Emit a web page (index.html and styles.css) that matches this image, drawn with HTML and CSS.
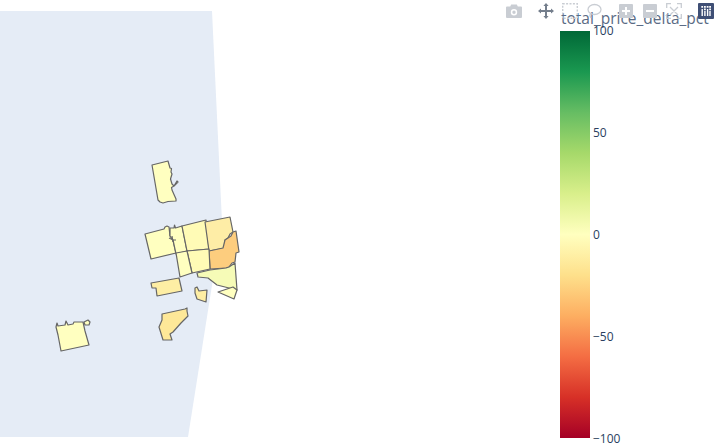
FILE: index.html
```html
<!DOCTYPE html>
<html lang="en">
<head>
<meta charset="utf-8">
<title>total_price_delta_pct map</title>
<link rel="stylesheet" href="styles.css">
</head>
<body>
<div class="stage">
  <svg class="chart" width="714" height="447" viewBox="0 0 714 447" xmlns="http://www.w3.org/2000/svg">
    <defs>
      <linearGradient id="rdylgn" x1="0" y1="1" x2="0" y2="0">
        <stop offset="0" stop-color="#a50026"/>
        <stop offset="0.1" stop-color="#d73027"/>
        <stop offset="0.2" stop-color="#f46d43"/>
        <stop offset="0.3" stop-color="#fdae61"/>
        <stop offset="0.4" stop-color="#fee08b"/>
        <stop offset="0.5" stop-color="#ffffbf"/>
        <stop offset="0.6" stop-color="#d9ef8b"/>
        <stop offset="0.7" stop-color="#a6d96a"/>
        <stop offset="0.8" stop-color="#66bd63"/>
        <stop offset="0.9" stop-color="#1a9850"/>
        <stop offset="1" stop-color="#006837"/>
      </linearGradient>
    </defs>

    <polygon class="land" points="0,11 212,11 222,222 188,437 0,437"/>

    <g class="regions">
      <polygon class="r-pale" points="152,165 168,161 170,168 171.500,168.500 171,172 172,174 170.500,179 172,184 174,186 177,181 178,182 174,186 171.500,187.500 172,190 176,199 176,201 168,201.500 163,203 160,202 158,200"/>
      <polygon class="r-pale" points="145,234 164,229 165,227 167,226 169,227 170,236 173,240 176,253 151,259"/>
      <polygon class="r-pale" points="170,228 174,228 174.500,225 175.500,228 182,226 187,251 176,254 173,240 170,236"/>
      <polygon class="r-pale2" points="182,226 206,220 209,249 187,251"/>
      <polygon class="r-sand" points="205,222 230,217 233,232 230,234 228,238 225,240 225,248 209,251"/>
      <polygon class="r-orange" points="209,251 223,248 225,240 228,238 231,236 233,232 236,231 239,252 236,253 235,262 232,263 229,267 226,268 210,269"/>
      <polygon class="r-pale2" points="187,251 209,249 210,269 192,273"/>
      <polygon class="r-pale" points="176,253 187,251 192,273 180,277"/>
      <polygon class="r-lime" points="197,273 210,270 226,268 229,267 235,263 237,290 217,285 208,278 198,277"/>
      <polygon class="r-pale" points="218,292 233,287 237,290 234,299"/>
      <polygon class="r-sand2" points="151,283 179,278 182,291 157,296 156,288 152,288"/>
      <polygon class="r-sand2" points="195,288 197,287 199,291 207,290 206,302 197,299 195,293"/>
      <polygon class="r-sand3" points="162,314 185,309 187,308 187,311 188,316 181,323 173,332 170,334 172,340 163,340 159,327 162,320"/>
      <polygon class="r-pale" points="56,327 57,323 58,326 65,325 66,321 68,325 73,324 74,322 83,322 85,331 89,345 61,351 58,335"/>
      <polygon class="r-pale" points="84,322 88,320 90,322 89,325 85,325"/>
      <path class="r-detail" d="M169 238l4 2 3 0M172 236l1 6"/>
    </g>

    <rect class="colorbar" x="560" y="31" width="30" height="407"/>
    <text class="cb-title" x="561" y="24">total_price_delta_pct</text>
    <text class="cb-tick" x="593" y="35">100</text>
    <text class="cb-tick" x="593" y="137">50</text>
    <text class="cb-tick" x="593" y="239">0</text>
    <text class="cb-tick" x="593" y="341">−50</text>
    <text class="cb-tick" x="593" y="443">−100</text>
  </svg>

  <div class="modebar">
    <svg class="mb-icon mb-camera" viewBox="0 0 16 16"><path fill-rule="evenodd" d="M0 4.500a1 1 0 0 1 1-1h3.200l1-2h5.600l1 2H15a1 1 0 0 1 1 1V14a1 1 0 0 1-1 1H1a1 1 0 0 1-1-1zM8 6a3.200 3.200 0 1 0 0 6.400A3.200 3.200 0 0 0 8 6zm0 1.500a1.700 1.700 0 1 1 0 3.400 1.700 1.700 0 0 1 0-3.400z"/></svg>
    <svg class="mb-icon mb-move" viewBox="0 0 16 16"><path d="M8 0l2.600 3H9v4h4V5.400l3 2.600-3 2.600V9H9v4h1.600L8 16l-2.600-3H7V9H3v1.600L0 8l3-2.600V7h4V3H5.400z"/></svg>
    <svg class="mb-icon mb-box" viewBox="0 0 16 16"><rect class="mb-dash" x="0.700" y="0.700" width="14.600" height="14.600"/></svg>
    <svg class="mb-icon mb-lasso" viewBox="0 0 16 16"><ellipse class="mb-line" cx="8.500" cy="6.500" rx="6.500" ry="5"/><path class="mb-line" d="M4.500 10.500c-1 1.500-.5 3 .5 4.500"/></svg>
    <svg class="mb-icon mb-plus" viewBox="0 0 16 16"><path fill-rule="evenodd" d="M2 1h12a1 1 0 0 1 1 1v12a1 1 0 0 1-1 1H2a1 1 0 0 1-1-1V2a1 1 0 0 1 1-1zm5 3v3H4v2h3v3h2V9h3V7H9V4z"/></svg>
    <svg class="mb-icon mb-minus" viewBox="0 0 16 16"><path fill-rule="evenodd" d="M2 1h12a1 1 0 0 1 1 1v12a1 1 0 0 1-1 1H2a1 1 0 0 1-1-1V2a1 1 0 0 1 1-1zm2 6v2h8V7z"/></svg>
    <svg class="mb-icon mb-auto" viewBox="0 0 16 16"><path class="mb-line" d="M.7 5V.7H5M11 .7h4.300V5M15.300 11v4.300H11M5 15.300H.7V11M4 4l8 8M12 4l-8 8"/></svg>
    <svg class="mb-icon mb-logo" viewBox="0 0 16 16"><rect class="logo-bg" width="16" height="16" rx="1"/><path class="logo-mark" d="M3.500 6h1.400v7H3.500zM6.200 8h1.400v5H6.200zM8.900 6h1.400v7H8.900zM11.300 8h1.400v5h-1.400z"/><path class="logo-dots" d="M3.300 3h1.800v1.800H3.300zM6 3h1.800v1.800H6zM8.700 3h1.800v1.800H8.700zM11.200 3H13v1.800h-1.800zM6 5.500h1.800v1.700H6zM11.200 5.500H13v1.700h-1.800z"/></svg>
  </div>
</div>
</body>
</html>
```

FILE: styles.css
```css
html, body {
  margin: 0;
  padding: 0;
  background: #fff;
}

.stage {
  position: relative;
  width: 714px;
  height: 447px;
  overflow: hidden;
}

.chart {
  display: block;
}

.land { fill: #e5ecf6; }

.regions polygon {
  stroke: #666;
  stroke-width: 1.200;
  stroke-linejoin: round;
}

.r-pale { fill: #ffffc0; }
.r-pale2 { fill: #fffbb6; }
.r-sand { fill: #feeda6; }
.r-sand2 { fill: #feeea4; }
.r-sand3 { fill: #fee898; }
.r-orange { fill: #fdcd7e; }
.r-lime { fill: #f6fbb7; }

.r-detail {
  fill: none;
  stroke: #666;
  stroke-width: 1.200;
}

.colorbar { fill: url(#rdylgn); }

.cb-title,
.cb-tick {
  font-family: "Open Sans", sans-serif;
}

.cb-title {
  font-size: 15.500px;
  fill: #5a6b85;
}

.cb-tick {
  font-size: 12px;
  fill: #2a3f5f;
}

.modebar {
  position: absolute;
  top: 3px;
  right: 0;
  display: flex;
  align-items: center;
}

.mb-icon {
  flex: none;
  width: 16px;
  height: 16px;
  fill: #c9cdd3;
}

.mb-move {
  margin-left: 16px;
  fill: #747e8c;
}
.mb-box { margin-left: 8px; }
.mb-lasso { margin-left: 8px; }
.mb-plus { margin-left: 16px; }
.mb-minus { margin-left: 8px; }
.mb-auto { margin-left: 8px; }
.mb-logo { margin-left: 16px; }

.mb-dash {
  fill: none;
  stroke: #c9cdd3;
  stroke-width: 1.400;
  stroke-dasharray: 2 1.400;
}

.mb-line {
  fill: none;
  stroke: #c9cdd3;
  stroke-width: 1.300;
}

.logo-bg { fill: #3f4f75; }
.logo-mark { fill: #fff; }
.logo-dots { fill: #fff; }
```
